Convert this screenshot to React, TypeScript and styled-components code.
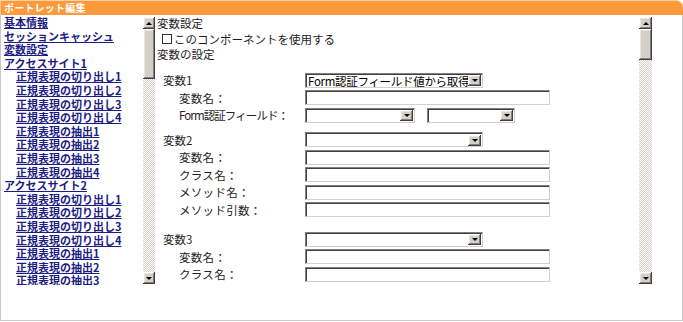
import styled, { createGlobalStyle } from "styled-components";

const GlobalStyle = createGlobalStyle`
  html, body {
    margin: 0;
    padding: 0;
    background: #fff;
  }
  body {
    font-family: "Noto Sans CJK JP", "DejaVu Sans", sans-serif;
  }
`;

interface NavItem {
  label: string;
  level: number;
}

const navItems: NavItem[] = [
  { label: "基本情報", level: 0 },
  { label: "セッションキャッシュ", level: 0 },
  { label: "変数設定", level: 0 },
  { label: "アクセスサイト1", level: 0 },
  { label: "正規表現の切り出し1", level: 1 },
  { label: "正規表現の切り出し2", level: 1 },
  { label: "正規表現の切り出し3", level: 1 },
  { label: "正規表現の切り出し4", level: 1 },
  { label: "正規表現の抽出1", level: 1 },
  { label: "正規表現の抽出2", level: 1 },
  { label: "正規表現の抽出3", level: 1 },
  { label: "正規表現の抽出4", level: 1 },
  { label: "アクセスサイト2", level: 0 },
  { label: "正規表現の切り出し1", level: 1 },
  { label: "正規表現の切り出し2", level: 1 },
  { label: "正規表現の切り出し3", level: 1 },
  { label: "正規表現の切り出し4", level: 1 },
  { label: "正規表現の抽出1", level: 1 },
  { label: "正規表現の抽出2", level: 1 },
  { label: "正規表現の抽出3", level: 1 },
  { label: "正規表現の抽出4", level: 1 },
];

type Field =
  | { kind: "input"; label: string }
  | { kind: "pair"; label: string };

interface VarGroup {
  name: string;
  value: string;
  after: number;
  fields: Field[];
}

const groups: VarGroup[] = [
  {
    name: "変数1",
    value: "Form認証フィールド値から取得",
    after: 7,
    fields: [
      { kind: "input", label: "変数名：" },
      { kind: "pair", label: "Form認証フィールド：" },
    ],
  },
  {
    name: "変数2",
    value: "",
    after: 12,
    fields: [
      { kind: "input", label: "変数名：" },
      { kind: "input", label: "クラス名：" },
      { kind: "input", label: "メソッド名：" },
      { kind: "input", label: "メソッド引数：" },
    ],
  },
  {
    name: "変数3",
    value: "",
    after: 0,
    fields: [
      { kind: "input", label: "変数名：" },
      { kind: "input", label: "クラス名：" },
    ],
  },
];

export default function App() {
  return (
    <>
      <GlobalStyle />
      <Portlet>
        <Header>ポートレット編集</Header>
        <Body>
          <Pane>
            <NavList>
              {navItems.map((item, i) => (
                <NavLink key={i} href="#" $level={item.level}>
                  {item.label}
                </NavLink>
              ))}
            </NavList>
            <Scrollbar thumbHeight={50} />
          </Pane>
          <Pane>
            <Content>
              <Line>変数設定</Line>
              <CheckLine>
                <CheckBox />
                このコンポーネントを使用する
              </CheckLine>
              <Line>変数の設定</Line>
              <Groups>
                {groups.map((g) => (
                  <Group key={g.name} $after={g.after}>
                    <Row>
                      <GroupLabel>{g.name}</GroupLabel>
                      <Select $w={178}>
                        <SelectText>{g.value}</SelectText>
                        <DropButton />
                      </Select>
                    </Row>
                    {g.fields.map((f, i) => (
                      <Row key={i}>
                        <FieldLabel $tight={f.kind === "pair"}>{f.label}</FieldLabel>
                        {f.kind === "input" ? (
                          <TextBox />
                        ) : (
                          <Pair>
                            <Select $w={110}>
                              <SelectText />
                              <DropButton />
                            </Select>
                            <Select $w={88}>
                              <SelectText />
                              <DropButton />
                            </Select>
                          </Pair>
                        )}
                      </Row>
                    ))}
                  </Group>
                ))}
              </Groups>
            </Content>
            <Scrollbar thumbHeight={31} wide />
          </Pane>
        </Body>
      </Portlet>
    </>
  );
}

const Scrollbar = ({ thumbHeight, wide }: { thumbHeight: number; wide?: boolean }) => (
  <Bar $wide={wide}>
    <BarButton>
      <Arrow $up />
    </BarButton>
    <Track>
      <Thumb style={{ height: thumbHeight }} />
    </Track>
    <BarButton>
      <Arrow />
    </BarButton>
  </Bar>
);

const raised = `
  background: #d4d0c8;
  box-shadow: inset -1px -1px #404040, inset 1px 1px #ffffff,
    inset -2px -2px #808080, inset 2px 2px #e8e6e0;
`;

const Portlet = styled.div`
  width: 683px;
  height: 322px;
  box-sizing: border-box;
  display: flex;
  flex-direction: column;
`;

const Header = styled.div`
  height: 15px;
  background: #ff9a3c;
  border-top: 1px solid #ffd2a6;
  border-left: 1px solid #ffd2a6;
  border-top-right-radius: 7px;
  box-sizing: border-box;
  color: #fff;
  font-size: 10px;
  font-weight: bold;
  line-height: 13px;
  padding-left: 3px;
  letter-spacing: 0.2px;
`;

const Body = styled.div`
  flex: 1;
  display: flex;
  gap: 1px;
  align-items: flex-start;
  padding: 1px 0 0 1px;
  border: 1px solid #c8c8c8;
  border-top: none;
  margin-bottom: 1px;
`;

const Pane = styled.div`
  display: flex;
  height: 269px;
`;

const NavList = styled.div`
  width: 139px;
  overflow: hidden;
  display: flex;
  flex-direction: column;
  padding-left: 2px;
`;

const NavLink = styled.a<{ $level: number }>`
  display: block;
  padding-left: ${(p) => (p.$level ? 12 : 0)}px;
  font-size: 11px;
  font-weight: bold;
  line-height: 13.6px;
  height: 13.6px;
  white-space: nowrap;
  color: #1c1c84;
  text-decoration: underline;
  text-underline-offset: 1px;
`;

const Bar = styled.div<{ $wide?: boolean }>`
  width: ${(p) => (p.$wide ? 13 : 12)}px;
  height: 267px;
  margin-top: 1px;
  display: flex;
  flex-direction: column;
`;

const BarButton = styled.div`
  ${raised}
  height: 12px;
  display: flex;
  align-items: center;
  justify-content: center;
  flex-shrink: 0;
`;

const Arrow = styled.div<{ $up?: boolean }>`
  width: 0;
  height: 0;
  border-left: 3px solid transparent;
  border-right: 3px solid transparent;
  ${(p) =>
    p.$up ? "border-bottom: 3px solid #000;" : "border-top: 3px solid #000;"}
`;

const Track = styled.div`
  flex: 1;
  background: repeating-conic-gradient(#d4d0c8 0% 25%, #ffffff 0% 50%) 0 0 / 2px 2px;
`;

const Thumb = styled.div`
  ${raised}
`;

const Content = styled.div`
  width: 482px;
  overflow: hidden;
  padding-left: 1px;
  font-size: 11.5px;
  color: #1e1e1e;
`;

const Line = styled.div`
  line-height: 15.5px;
  height: 15.5px;
  white-space: nowrap;
`;

const CheckLine = styled(Line)`
  display: flex;
  align-items: center;
  gap: 2px;
  padding-left: 5px;
`;

const CheckBox = styled.span`
  width: 8px;
  height: 8px;
  border: 1px solid #333;
  background: #fff;
  flex-shrink: 0;
`;

const Groups = styled.div`
  margin-top: 9px;
  display: flex;
  flex-direction: column;
`;

const Group = styled.div<{ $after: number }>`
  display: flex;
  flex-direction: column;
  margin-bottom: ${(p) => p.$after}px;
`;

const Row = styled.div`
  display: flex;
  align-items: center;
  height: 17.5px;
`;

const GroupLabel = styled.div`
  width: 142px;
  padding-left: 6px;
  white-space: nowrap;
`;

const FieldLabel = styled(GroupLabel)<{ $tight?: boolean }>`
  width: 126px;
  padding-left: 22px;
  letter-spacing: ${(p) => (p.$tight ? "-0.9px" : "0.3px")};
`;

const inset = `
  box-sizing: border-box;
  height: 15px;
  background: #fff;
  border-top: 1px solid #808080;
  border-left: 1px solid #808080;
  border-right: 1px solid #d4d0c8;
  border-bottom: 1px solid #d4d0c8;
  box-shadow: inset 1px 1px #404040;
`;

const TextBox = styled.div`
  ${inset}
  width: 245px;
`;

const Select = styled.div<{ $w: number }>`
  ${inset}
  width: ${(p) => p.$w}px;
  display: flex;
  align-items: center;
  padding: 1px 1px 0 2px;
`;

const SelectText = styled.span`
  flex: 1;
  font-size: 11.5px;
  letter-spacing: -0.3px;
  line-height: 12px;
  white-space: nowrap;
  overflow: hidden;
  color: #000;
`;

const DropButton = styled.span`
  ${raised}
  width: 13px;
  height: 11px;
  flex-shrink: 0;
  display: flex;
  align-items: center;
  justify-content: center;
  &::after {
    content: "";
    border-left: 3px solid transparent;
    border-right: 3px solid transparent;
    border-top: 3px solid #000;
  }
`;

const Pair = styled.div`
  display: flex;
  gap: 12px;
`;
